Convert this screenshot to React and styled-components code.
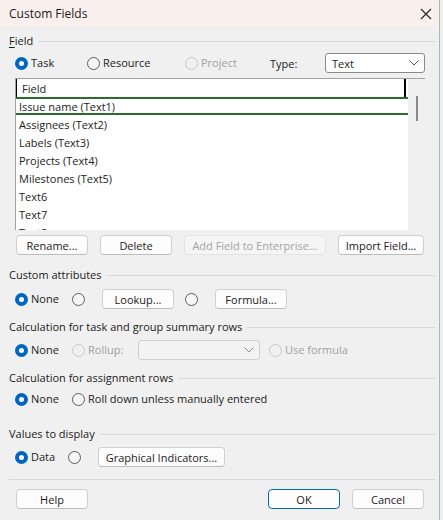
import styled, { createGlobalStyle } from "styled-components";

const GlobalStyle = createGlobalStyle`
  body {
    margin: 0;
    background: #eef0e6;
    font-family: "Segoe UI", "Open Sans", sans-serif;
    font-size: 11px;
    color: #1b1b1b;
  }
`;

const Dialog = styled.div`
  width: 440px;
  height: 520px;
  box-sizing: border-box;
  background: #f0f0f0;
  border-right: 1px solid #a9b6c0;
  display: flex;
  flex-direction: column;
`;

const TitleBar = styled.div`
  height: 27px;
  background: #f9f0ee;
  display: flex;
  align-items: center;
  justify-content: space-between;
  padding: 0 7px 0 9px;
  font-size: 12px;
`;

const CloseIcon = () => (
  <svg width="12" height="12" viewBox="0 0 12 12">
    <path d="M1 1 L11 11 M11 1 L1 11" stroke="#222" strokeWidth="1.1" />
  </svg>
);

const Body = styled.div`
  padding: 0 0 0 9px;
  display: flex;
  flex-direction: column;
`;

const GroupHeader = styled.div`
  height: 16px;
  margin-top: ${(p) => p.$mt}px;
  margin-right: 4px;
  display: flex;
  align-items: center;
  gap: 5px;
  line-height: 16px;

  &::after {
    content: "";
    flex: 1;
    height: 1px;
    background: #d8d8d8;
  }

  u {
    text-decoration: underline;
    text-underline-offset: 2px;
  }
`;

const Row = styled.div`
  height: 20px;
  margin-top: ${(p) => p.$mt}px;
  padding-left: ${(p) => p.$pl ?? 6}px;
  display: flex;
  align-items: center;
`;

const RadioItem = styled.label`
  display: flex;
  align-items: center;
  gap: 3px;
  width: ${(p) => (p.$w ? `${p.$w}px` : "auto")};
  margin-left: ${(p) => p.$ml || 0}px;
  flex-shrink: 0;
  color: ${(p) => (p.$disabled ? "#a0a0a0" : "#1b1b1b")};
  line-height: 16px;
`;

const Circle = styled.span`
  width: 13px;
  height: 13px;
  box-sizing: border-box;
  border-radius: 50%;
  flex-shrink: 0;
  border: ${(p) =>
    p.$checked
      ? "4px solid #0067c0"
      : p.$disabled
      ? "1px solid #c9c9c9"
      : "1px solid #5c5c5c"};
  background: ${(p) => (p.$checked ? "#ffffff" : p.$disabled ? "#f0f0f0" : "#f6f6f6")};
`;

const Radio = ({ checked, disabled, label, w, ml }) => (
  <RadioItem $w={w} $ml={ml} $disabled={disabled}>
    <Circle $checked={checked} $disabled={disabled} />
    {label}
  </RadioItem>
);

const Button = styled.button`
  width: ${(p) => p.$w}px;
  height: 20px;
  margin-left: ${(p) => p.$ml || 0}px;
  flex-shrink: 0;
  box-sizing: border-box;
  padding: 0;
  font-family: inherit;
  font-size: 11px;
  color: ${(p) => (p.disabled ? "#a3a3a3" : "#1b1b1b")};
  background: ${(p) => (p.disabled ? "#f5f5f5" : "#fdfdfd")};
  border: 1px solid ${(p) => (p.$primary ? "#0067c0" : p.disabled ? "#e3e3e3" : "#d0d0d0")};
  border-bottom-color: ${(p) => (p.$primary ? "#0067c0" : p.disabled ? "#e3e3e3" : "#bdbdbd")};
  border-radius: 4px;
`;

const TypeLabel = styled.span`
  width: 55px;
  flex-shrink: 0;
`;

const Select = styled.div`
  width: ${(p) => p.$w}px;
  height: 20px;
  box-sizing: border-box;
  flex-shrink: 0;
  display: flex;
  align-items: center;
  justify-content: space-between;
  padding: 0 5px 0 6px;
  background: ${(p) => (p.$disabled ? "#f3f3f3" : "#ffffff")};
  border: 1px solid ${(p) => (p.$disabled ? "#cfcfcf" : "#8a8a8a")};
  border-radius: 3px;
`;

const Chevron = ({ color = "#555" }) => (
  <svg width="10" height="6" viewBox="0 0 10 6">
    <path d="M0.5 0.5 L5 5 L9.5 0.5" fill="none" stroke={color} strokeWidth="1" />
  </svg>
);

const ListBox = styled.div`
  margin-top: 5px;
  margin-left: 6px;
  width: 410px;
  height: 152px;
  box-sizing: border-box;
  border-top: 1px solid #a0a0a0;
  border-left: 1px solid #a0a0a0;
  display: flex;
  overflow: hidden;
`;

const ListMain = styled.div`
  flex: 1;
  background: #ffffff;
  display: flex;
  flex-direction: column;
  overflow: hidden;
`;

const ListHeader = styled.div`
  height: 18px;
  flex-shrink: 0;
  box-sizing: border-box;
  border-left: 1px solid #000;
  padding-left: 5px;
  line-height: 19px;
  display: flex;

  span {
    width: 382px;
    border-right: 2px solid #000;
  }
`;

const ListRow = styled.div`
  height: 18px;
  flex-shrink: 0;
  box-sizing: border-box;
  padding-left: 3px;
  border-top: ${(p) => (p.$selected ? "2px solid #2e6b2e" : "none")};
  border-bottom: ${(p) => (p.$selected ? "2px solid #2e6b2e" : "none")};
  line-height: ${(p) => (p.$selected ? "15px" : "19px")};
`;

const ScrollTrack = styled.div`
  width: 17px;
  background: #f0f0f0;
  display: flex;
  justify-content: center;
  padding-top: 17px;
  box-sizing: border-box;
`;

const Thumb = styled.div`
  width: 2px;
  height: 25px;
  background: #8a8a8a;
`;

const Separator = styled.div`
  height: 1px;
  background: #d8d8d8;
  margin: 12px 4px 0 0;
`;

const fields = [
  "Issue name (Text1)",
  "Assignees (Text2)",
  "Labels (Text3)",
  "Projects (Text4)",
  "Milestones (Text5)",
  "Text6",
  "Text7",
  "Text8",
];

export default function App() {
  return (
    <>
      <GlobalStyle />
      <Dialog>
        <TitleBar>
          Custom Fields
          <CloseIcon />
        </TitleBar>
        <Body>
          <GroupHeader $mt={6}>
            <span>
              <u>F</u>ield
            </span>
          </GroupHeader>
          <Row $mt={4}>
            <Radio checked label="Task" w={72} />
            <Radio label="Resource" w={98} />
            <Radio disabled label="Project" w={85} />
            <TypeLabel>Type:</TypeLabel>
            <Select $w={100}>
              Text
              <Chevron />
            </Select>
          </Row>
          <ListBox>
            <ListMain>
              <ListHeader>
                <span>Field</span>
              </ListHeader>
              {fields.map((f, i) => (
                <ListRow key={f} $selected={i === 0}>
                  {f}
                </ListRow>
              ))}
            </ListMain>
            <ScrollTrack>
              <Thumb />
            </ScrollTrack>
          </ListBox>
          <Row $mt={5} $pl={7}>
            <Button $w={72}>Rename...</Button>
            <Button $w={72} $ml={12}>Delete</Button>
            <Button $w={142} $ml={12} disabled>
              Add Field to Enterprise...
            </Button>
            <Button $w={86} $ml={12}>Import Field...</Button>
          </Row>

          <GroupHeader $mt={12}>Custom attributes</GroupHeader>
          <Row $mt={6}>
            <Radio checked label="None" w={57} />
            <Radio w={30} />
            <Button $w={72}>Lookup...</Button>
            <Radio w={30} ml={11} />
            <Button $w={72}>Formula...</Button>
          </Row>

          <GroupHeader $mt={10}>Calculation for task and group summary rows</GroupHeader>
          <Row $mt={5}>
            <Radio checked label="None" w={57} />
            <Radio disabled label="Rollup:" w={66} />
            <Select $w={122} $disabled>
              <span />
              <Chevron color="#8a8a8a" />
            </Select>
            <Radio disabled label="Use formula" ml={9} />
          </Row>

          <GroupHeader $mt={10}>Calculation for assignment rows</GroupHeader>
          <Row $mt={3}>
            <Radio checked label="None" w={57} />
            <Radio label="Roll down unless manually entered" />
          </Row>

          <GroupHeader $mt={17}>Values to display</GroupHeader>
          <Row $mt={5}>
            <Radio checked label="Data" w={53} />
            <Radio w={30} />
            <Button $w={127}>Graphical Indicators...</Button>
          </Row>

          <Separator />
          <Row $mt={9} $pl={7}>
            <Button $w={72}>Help</Button>
            <Button $w={72} $ml={180} $primary>
              OK
            </Button>
            <Button $w={72} $ml={12}>Cancel</Button>
          </Row>
        </Body>
      </Dialog>
    </>
  );
}
